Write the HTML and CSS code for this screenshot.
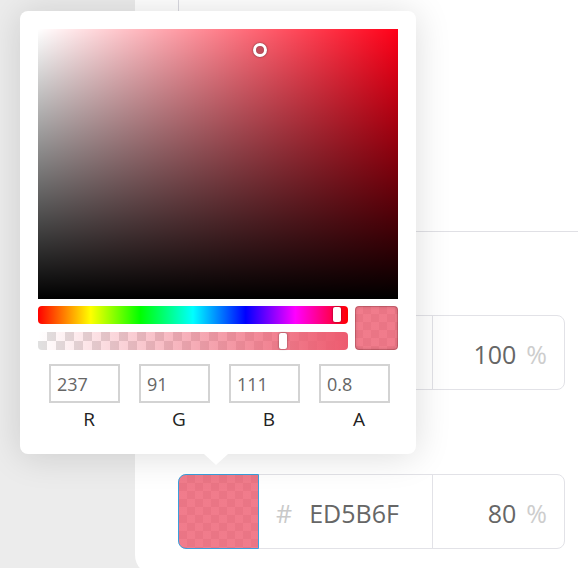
FILE: index.html
```html
<!DOCTYPE html>
<html>
<head>
<meta charset="utf-8">
<link rel="stylesheet" href="styles.css">
</head>
<body>
<div class="page">
  <aside class="sidebar"></aside>
  <main class="panel">
    <div class="panel-top">
      <div class="top-gutter"></div>
      <div class="top-main"></div>
    </div>
    <div class="rows">
      <div class="color-row">
        <div class="swatch swatch-solid"></div>
        <div class="hex"><span class="hash">#</span><span class="hex-val">FF0018</span></div>
        <div class="pct"><span class="pct-val">100</span><span class="pct-sign">%</span></div>
      </div>
      <div class="color-row">
        <div class="swatch swatch-active"></div>
        <div class="hex"><span class="hash">#</span><span class="hex-val">ED5B6F</span></div>
        <div class="pct"><span class="pct-val">80</span><span class="pct-sign">%</span></div>
      </div>
    </div>
  </main>

  <div class="picker">
    <div class="sat">
      <div class="sat-cursor"></div>
    </div>
    <div class="controls">
      <div class="bars">
        <div class="hue-bar"><div class="thumb hue-thumb"></div></div>
        <div class="alpha-bar"><div class="thumb alpha-thumb"></div></div>
      </div>
      <div class="preview"></div>
    </div>
    <div class="fields">
      <div class="field"><input class="field-input" type="text" value="237"><div class="field-label">R</div></div>
      <div class="field"><input class="field-input" type="text" value="91"><div class="field-label">G</div></div>
      <div class="field"><input class="field-input" type="text" value="111"><div class="field-label">B</div></div>
      <div class="field"><input class="field-input" type="text" value="0.8"><div class="field-label">A</div></div>
    </div>
    <div class="arrow"></div>
  </div>
</div>
</body>
</html>
```

FILE: styles.css
```css
html, body {
  margin: 0;
  padding: 0;
}
body {
  width: 578px;
  height: 568px;
  overflow: hidden;
  font-family: "Open Sans", "Noto Sans", sans-serif;
  background: #ececec;
}
.page {
  position: relative;
  display: flex;
  width: 578px;
  height: 568px;
}
.sidebar {
  flex: 0 0 135px;
  background: #ececec;
}
.panel {
  flex: 1;
  height: 575px;
  background: #fff;
  border-bottom-left-radius: 20px;
}
.panel-top {
  display: flex;
  height: 231px;
  border-bottom: 1px solid #e0e0e5;
}
.top-gutter {
  width: 43px;
  border-right: 1px solid #d9d9e0;
}
.top-main {
  flex: 1;
}
.rows {
  padding: 0 13px 0 43px;
}
.color-row {
  display: flex;
  height: 75px;
  margin-top: 83px;
  box-sizing: border-box;
  border: 1px solid #e2e2e7;
  border-radius: 8px;
}
.color-row + .color-row {
  margin-top: 84px;
}
.swatch {
  flex: 0 0 81px;
  margin: -1px 0 -1px -1px;
  border-radius: 8px 0 0 8px;
  box-sizing: border-box;
}
.swatch-solid {
  background: #ff0018;
}
.swatch-active {
  border: 1px solid #3b9fdc;
  background:
    linear-gradient(rgba(237, 91, 111, 0.8), rgba(237, 91, 111, 0.8)),
    repeating-conic-gradient(#dedede 0 25%, #fff 0 50%) 0 0 / 16px 16px;
}
.hex {
  flex: 0 0 174px;
  display: flex;
  align-items: center;
  padding: 2px 0 0 17px;
  box-sizing: border-box;
  border-right: 1px solid #e2e2e7;
  font-size: 25px;
}
.hash {
  color: #c9c9c9;
  margin-right: 17px;
}
.hex-val {
  color: #666;
}
.pct {
  flex: 1;
  display: flex;
  align-items: center;
  justify-content: flex-end;
  padding: 2px 17px 0 0;
  font-size: 25px;
}
.pct-val {
  color: #666;
}
.pct-sign {
  color: #cdcdcd;
  margin-left: 10px;
}

/* picker popup */
.picker {
  position: absolute;
  left: 20px;
  top: 11px;
  width: 396px;
  height: 443px;
  box-sizing: border-box;
  padding: 18px;
  background: #fff;
  border-radius: 8px;
  box-shadow: 0 2px 36px rgba(0, 0, 0, 0.14);
}
.sat {
  position: relative;
  width: 360px;
  height: 270px;
  background:
    linear-gradient(to top, #000, rgba(0, 0, 0, 0)),
    linear-gradient(to right, #fff, rgba(255, 255, 255, 0)),
    #ff0018;
}
.sat-cursor {
  position: absolute;
  left: 215px;
  top: 14px;
  width: 8px;
  height: 8px;
  border: 3px solid #fff;
  border-radius: 50%;
  background: #c24e5c;
  box-shadow: 0 0 2px rgba(0, 0, 0, 0.6), inset 0 0 1px rgba(0, 0, 0, 0.4);
}
.controls {
  display: flex;
  gap: 7px;
  margin-top: 7px;
}
.bars {
  display: flex;
  flex-direction: column;
  gap: 8px;
  width: 310px;
}
.hue-bar, .alpha-bar {
  position: relative;
  height: 18px;
  border-radius: 4px;
}
.hue-bar {
  background: linear-gradient(to right, #f00 0%, #ff0 17%, #0f0 33%, #0ff 50%, #00f 67%, #f0f 83%, #f00 100%);
}
.alpha-bar {
  background:
    linear-gradient(to right, rgba(237, 91, 111, 0), rgb(237, 91, 111)),
    repeating-conic-gradient(#e0e0e0 0 25%, #fff 0 50%) 0 0 / 18px 18px;
}
.thumb {
  position: absolute;
  top: 1px;
  width: 8px;
  height: 16px;
  border-radius: 2px;
  background: #fff;
  box-shadow: 0 0 2px rgba(0, 0, 0, 0.6);
}
.hue-thumb {
  left: 295px;
  height: 15px;
}
.alpha-thumb {
  left: 241px;
}
.preview {
  width: 43px;
  height: 44px;
  border-radius: 4px;
  background:
    linear-gradient(rgba(237, 91, 111, 0.8), rgba(237, 91, 111, 0.8)),
    repeating-conic-gradient(#dedede 0 25%, #fff 0 50%) 0 0 / 16px 16px;
  box-shadow: inset 0 0 0 1px rgba(120, 30, 40, 0.25), inset 0 0 4px rgba(0, 0, 0, 0.2);
}
.fields {
  display: grid;
  grid-template-columns: repeat(4, 90px);
  margin-top: 14px;
}
.field {
  display: flex;
  flex-direction: column;
}
.field-input {
  width: 71px;
  height: 39px;
  margin: 0 0 0 11px;
  padding: 0 0 0 6px;
  box-sizing: border-box;
  border: 2px solid #d3d3d3;
  border-radius: 0;
  outline: none;
  font-family: "Open Sans", "Noto Sans", sans-serif;
  font-size: 18px;
  color: #666;
  background: #fff;
}
.field-label {
  margin-top: 4px;
  padding-left: 12px;
  text-align: center;
  font-size: 19px;
  line-height: 25px;
  color: #222;
}
.arrow {
  position: absolute;
  left: 184px;
  top: 443px;
  width: 0;
  height: 0;
  border-left: 12px solid transparent;
  border-right: 12px solid transparent;
  border-top: 11px solid #fff;
}
```
